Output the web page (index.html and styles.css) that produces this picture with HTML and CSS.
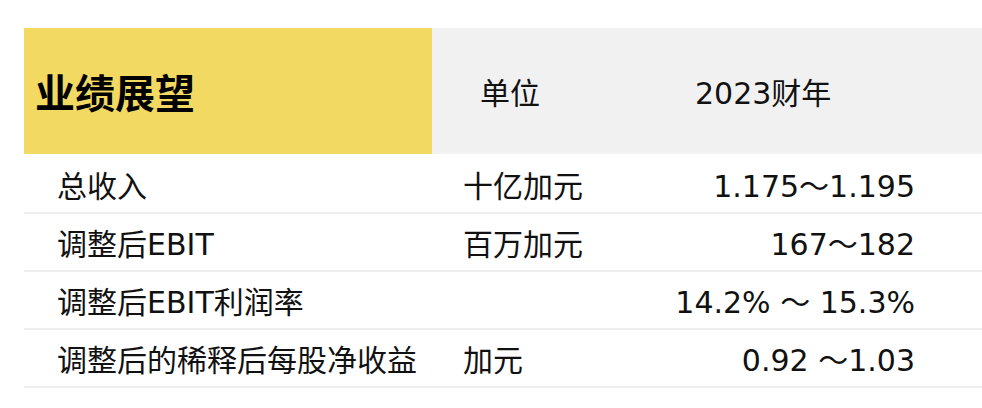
FILE: index.html
```html
<!DOCTYPE html>
<html lang="zh">
<head>
<meta charset="utf-8">
<link rel="stylesheet" href="styles.css">
</head>
<body>
<table class="outlook">
  <thead>
    <tr>
      <th class="title">业绩展望</th>
      <th class="unit-h">单位</th>
      <th class="year-h">2023财年</th>
    </tr>
  </thead>
  <tbody>
    <tr><td class="name">总收入</td><td class="unit">十亿加元</td><td class="val">1.175～1.195</td></tr>
    <tr><td class="name">调整后EBIT</td><td class="unit">百万加元</td><td class="val">167～182</td></tr>
    <tr><td class="name">调整后EBIT利润率</td><td class="unit"></td><td class="val">14.2% ～ 15.3%</td></tr>
    <tr><td class="name">调整后的稀释后每股净收益</td><td class="unit">加元</td><td class="val">0.92 ～1.03</td></tr>
  </tbody>
</table>
</body>
</html>
```

FILE: styles.css
```css
html, body {
  margin: 0;
  background: #ffffff;
}
body {
  padding: 28px 0 0 24px;
  font-family: "DejaVu Sans", "Noto Sans CJK SC", sans-serif;
  color: #111111;
}
.outlook {
  border-collapse: collapse;
  width: 958px;
  table-layout: fixed;
}
.outlook th {
  height: 126px;
  padding: 0;
  background: #f1f1f1;
  border-bottom: 2px solid #ffffff;
  font-weight: normal;
  font-size: 30px;
  text-align: left;
  vertical-align: middle;
}
.outlook th.title {
  width: 408px;
  background: #f2d962;
  font-size: 40px;
  font-weight: bold;
  padding-left: 11px;
  box-sizing: border-box;
  color: #000;
}
.outlook th.unit-h {
  width: 230px;
  padding-left: 48px;
  box-sizing: border-box;
}
.outlook th.year-h {
  padding-left: 33px;
}
.outlook td {
  height: 56px;
  padding: 0;
  font-size: 30px;
  border-bottom: 2px solid #eeeeee;
  vertical-align: middle;
}
.outlook td.name {
  padding-left: 33px;
}
.outlook td.unit {
  padding-left: 31px;
}
.outlook td.val {
  text-align: right;
  padding-right: 67px;
}
```
